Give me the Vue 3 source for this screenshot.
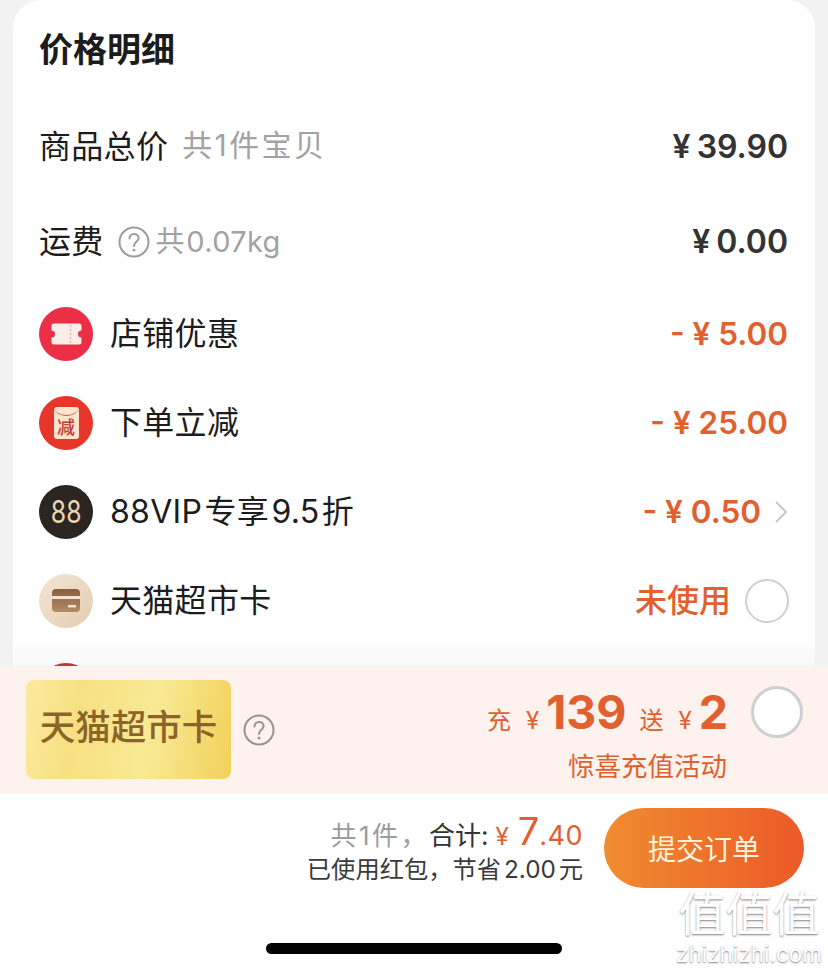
<template>
  <div class="page">
    <div class="card">
      <h2 class="title">价格明细</h2>

      <div class="row plain">
        <span class="label">商品总价</span>
        <span class="hint first">共1件宝贝</span>
        <span class="amount">¥ 39.90</span>
      </div>
      <div class="row plain">
        <span class="label">运费</span>
        <svg class="help" viewBox="0 0 32 32">
          <circle cx="16" cy="16" r="14.5" fill="none" stroke="#9b9b9b" stroke-width="2" />
          <path d="M11.5 12.6c0-2.8 2-4.6 4.6-4.6s4.500 1.700 4.500 4c0 3.900-4.600 3.800-4.600 8" fill="none" stroke="#9b9b9b" stroke-width="2" stroke-linecap="round" />
          <circle cx="16" cy="24.200" r="1.400" fill="#9b9b9b" />
        </svg>
        <span class="hint second">共 0.07kg</span>
        <span class="amount">¥ 0.00</span>
      </div>

      <div class="row">
        <span class="icon ticket-bg">
          <svg viewBox="0 0 54 54" width="54" height="54">
            <path d="M15 16.500h25a2.500 2.500 0 0 1 2.500 2.500v4.500a3.500 3.500 0 0 0 0 7V35a2.500 2.500 0 0 1-2.500 2.500H15a2.500 2.500 0 0 1-2.500-2.500v-4.500a3.500 3.500 0 0 0 0-7V19a2.500 2.500 0 0 1 2.500-2.500z" fill="#fbeee8" />
            <path d="M31.500 18v18" stroke="#eeb7ae" stroke-width="1.500" stroke-dasharray="2 2" />
          </svg>
        </span>
        <span class="label">店铺优惠</span>
        <span class="amount orange">- ¥ 5.00</span>
      </div>
      <div class="row">
        <span class="icon cut-bg">
          <span class="packet">减</span>
        </span>
        <span class="label">下单立减</span>
        <span class="amount orange">- ¥ 25.00</span>
      </div>
      <div class="row">
        <span class="icon vip-bg"><span class="vip-num">88</span></span>
        <span class="label tight">88VIP 专享 9.5 折</span>
        <span class="amount orange">- ¥ 0.50</span>
        <svg class="chevron" viewBox="0 0 14 24">
          <path d="M2 2l10 10L2 22" fill="none" stroke="#c8c8c8" stroke-width="2" />
        </svg>
      </div>
      <div class="row">
        <span class="icon wallet-bg">
          <svg viewBox="0 0 54 54" width="54" height="54">
            <defs>
              <linearGradient id="wallet" x1="0" y1="0" x2="0" y2="1">
                <stop offset="0" stop-color="#8a5f40" />
                <stop offset="1" stop-color="#b08c68" />
              </linearGradient>
            </defs>
            <rect x="13" y="15" width="28" height="23" rx="4" fill="url(#wallet)" />
            <rect x="13" y="22" width="28" height="3" fill="#f3e4d2" />
            <rect x="29" y="31" width="8" height="2.500" fill="#f3e4d2" />
          </svg>
        </span>
        <span class="label">天猫超市卡</span>
        <span class="unused">未使用</span>
        <span class="radio"></span>
      </div>
      <div class="fade"></div>
      <div class="row">
        <span class="icon next-bg"></span>
      </div>
    </div>

    <div class="promo">
      <div class="gold-card">天猫超市卡</div>
      <svg class="promo-help" viewBox="0 0 32 32">
        <circle cx="16" cy="16" r="14.500" fill="none" stroke="#9a918c" stroke-width="2" />
        <path d="M11.500 12.600c0-2.800 2-4.600 4.600-4.600s4.500 1.700 4.500 4c0 3.900-4.600 3.800-4.600 8" fill="none" stroke="#9a918c" stroke-width="2" stroke-linecap="round" />
        <circle cx="16" cy="24.200" r="1.400" fill="#9a918c" />
      </svg>
      <div class="promo-info">
        <div class="promo-line">
          <span class="small">充</span>
          <span class="small yen">¥</span>
          <span class="big">139</span>
          <span class="small gift">送</span>
          <span class="small yen">¥</span>
          <span class="big">2</span>
        </div>
        <div class="promo-sub">惊喜充值活动</div>
      </div>
      <span class="radio large"></span>
    </div>

    <div class="footer">
      <div class="bar">
        <div class="sum">
          <div class="sum-line">
            <span class="count">共1件&#65292;</span>
            <span class="total">合计:</span>
            <span class="price-yen">¥</span>
            <span class="price-int">7</span>
            <span class="price-dec">.40</span>
          </div>
          <div class="saved">已使用红包&#65292;节省 2.00 元</div>
        </div>
        <button class="submit" type="button">提交订单</button>
      </div>
      <div class="home"></div>
      <div class="watermark">
        <span class="wm-top">值值值</span>
        <span class="wm-url">zhizhizhi.com</span>
      </div>
    </div>
  </div>
</template>

<script setup>
</script>

<style scoped>
.page {
  position: relative;
  width: 828px;
  height: 970px;
  overflow: hidden;
  display: flex;
  flex-direction: column;
  background: #f2f2f2;
  font-family: "Inter", "Noto Sans CJK SC", sans-serif;
  color: #1c1c1c;
}

.card {
  position: relative;
  height: 666px;
  flex: none;
  margin: 0 13px;
  padding: 0 27px 0 26px;
  box-sizing: border-box;
  overflow: hidden;
  background: #fff;
  border-radius: 28px 28px 0 0;
}

.title {
  height: 99px;
  margin: 0;
  padding-top: 28px;
  box-sizing: border-box;
  font-size: 34px;
  line-height: 44px;
  font-weight: 600;
}

.row {
  display: flex;
  align-items: center;
  height: 89px;
  flex: none;
}

.row.plain {
  height: 95px;
}

.label {
  font-size: 32px;
  line-height: 40px;
  white-space: nowrap;
  letter-spacing: 0.3px;
}

.label.tight {
  word-spacing: -7px;
}

.icon {
  position: relative;
  z-index: 1;
  width: 54px;
  height: 54px;
  flex: none;
  margin-right: 17px;
  border-radius: 50%;
  display: flex;
  align-items: center;
  justify-content: center;
}

.ticket-bg {
  background: #ea2f47;
}

.cut-bg {
  background: #e8352a;
}

.packet {
  position: relative;
  width: 25px;
  height: 32px;
  box-sizing: border-box;
  padding-top: 11px;
  border-radius: 3px;
  background: #fbe5cd;
  color: #c23a2c;
  font-size: 18px;
  line-height: 20px;
  text-align: center;
  font-weight: 500;
}

.packet::before {
  content: "";
  position: absolute;
  left: 0;
  right: 0;
  top: 0;
  height: 8px;
  border-bottom: 1.5px solid #d0483a;
  border-radius: 0 0 50% 50% / 0 0 100% 100%;
}

.vip-bg {
  background: #2b2522;
  color: #ecd5b0;
}

.vip-num {
  display: block;
  font-size: 31px;
  font-weight: 400;
  transform: scaleX(0.8);
}

.wallet-bg {
  background: linear-gradient(135deg, #f3e6d4, #e3cdb0);
}

.next-bg {
  background: #cf2a3c;
}

.hint {
  padding-bottom: 6px;
  font-size: 29px;
  color: #a2a2a2;
  white-space: nowrap;
}

.hint.first {
  margin-left: 14px;
  padding-bottom: 8px;
  font-size: 30px;
  letter-spacing: 2.400px;
}

.hint.second {
  margin-left: 6px;
  word-spacing: -7px;
  letter-spacing: 0.3px;
}

.help {
  width: 32px;
  height: 32px;
  margin-left: 14px;
}

.amount {
  margin-left: auto;
  font-size: 32px;
  font-weight: 600;
  color: #333;
  white-space: nowrap;
  word-spacing: -2px;
}

.amount.orange {
  color: #e0612f;
  font-size: 31.500px;
  word-spacing: 0;
}

.chevron {
  width: 14px;
  height: 24px;
  margin-left: 13px;
}

.unused {
  margin-left: auto;
  padding-bottom: 6px;
  font-size: 32px;
  font-weight: 500;
  color: #e0612f;
}

.radio {
  width: 44px;
  height: 44px;
  margin: 0 -1px 0 14px;
  flex: none;
  box-sizing: border-box;
  border: 2px solid #cfcfcf;
  border-radius: 50%;
  background: #fff;
}

.fade {
  position: absolute;
  left: 0;
  right: 0;
  bottom: 0;
  height: 26px;
  background: linear-gradient(rgba(245, 245, 245, 0), rgba(245, 245, 245, 0.7));
}

.promo {
  height: 128px;
  flex: none;
  display: flex;
  align-items: flex-start;
  padding: 14px 25px 0 26px;
  box-sizing: border-box;
  background: #fdf2ee;
}

.gold-card {
  width: 205px;
  height: 99px;
  flex: none;
  border-radius: 8px;
  background: linear-gradient(100deg, #fbeba0 0%, #f6e081 25%, #f8ea94 60%, #f2d05a 100%);
  color: #8d6428;
  font-size: 35.500px;
  font-weight: 500;
  line-height: 96px;
  text-align: center;
  white-space: nowrap;
}

.promo-help {
  width: 32px;
  height: 32px;
  margin: 34px 0 0 12px;
}

.promo-info {
  margin-left: auto;
  padding-top: 3px;
  text-align: right;
  color: #e0612f;
}

.promo-line {
  display: flex;
  align-items: baseline;
  justify-content: flex-end;
  height: 58px;
}

.small {
  font-size: 24px;
}

.yen {
  margin: 0 7px 0 15px;
}

.gift {
  margin-left: 13px;
}

.big {
  font-size: 46.500px;
  line-height: 58px;
  font-weight: 700;
}

.promo-sub {
  margin: 7px 1px 0 0;
  font-size: 26.500px;
  line-height: 36px;
}

.radio.large {
  width: 52px;
  height: 52px;
  margin: 6px 0 0 23px;
  border-width: 3px;
}

.footer {
  position: relative;
  flex: 1;
  display: flex;
  flex-direction: column;
  background: #fff;
}

.bar {
  display: flex;
  justify-content: flex-end;
  align-items: center;
  gap: 21px;
  padding: 14px 24px 0 0;
}

.sum {
  text-align: right;
}

.sum-line {
  display: flex;
  align-items: baseline;
  justify-content: flex-end;
  height: 40px;
  margin-top: -3px;
}

.count {
  font-size: 26px;
  color: #9c9c9c;
  letter-spacing: 2.500px;
}

.total {
  font-size: 26px;
  color: #333;
}

.price-yen {
  margin: 0 9px 0 7px;
  font-size: 24px;
  color: #e0612f;
}

.price-int {
  font-size: 38px;
  color: #e0612f;
}

.price-dec {
  font-size: 27px;
  color: #e0612f;
  letter-spacing: 0.5px;
}

.saved {
  margin-top: 4px;
  font-size: 24.300px;
  line-height: 34px;
  color: #3a3a3a;
  word-spacing: -4px;
  white-space: nowrap;
}

.submit {
  width: 200px;
  height: 80px;
  flex: none;
  border: 0;
  border-radius: 40px;
  background: linear-gradient(90deg, #f08c30, #ec5a28);
  color: #fff3dd;
  font-family: inherit;
  font-size: 28px;
}

.home {
  width: 296px;
  height: 11px;
  margin: 55px auto 0;
  border-radius: 6px;
  background: #000;
}

.watermark {
  position: absolute;
  left: 675px;
  top: 93px;
  width: 148px;
  display: flex;
  flex-direction: column;
  align-items: center;
  color: #fff;
  text-shadow: 0 1px 2px rgba(0, 0, 0, 0.5);
}

.wm-top {
  font-size: 47px;
  line-height: 54px;
  font-weight: 400;
}

.wm-url {
  font-size: 22.500px;
  line-height: 26px;
}
</style>

<style>
html,
body {
  margin: 0;
}
</style>
